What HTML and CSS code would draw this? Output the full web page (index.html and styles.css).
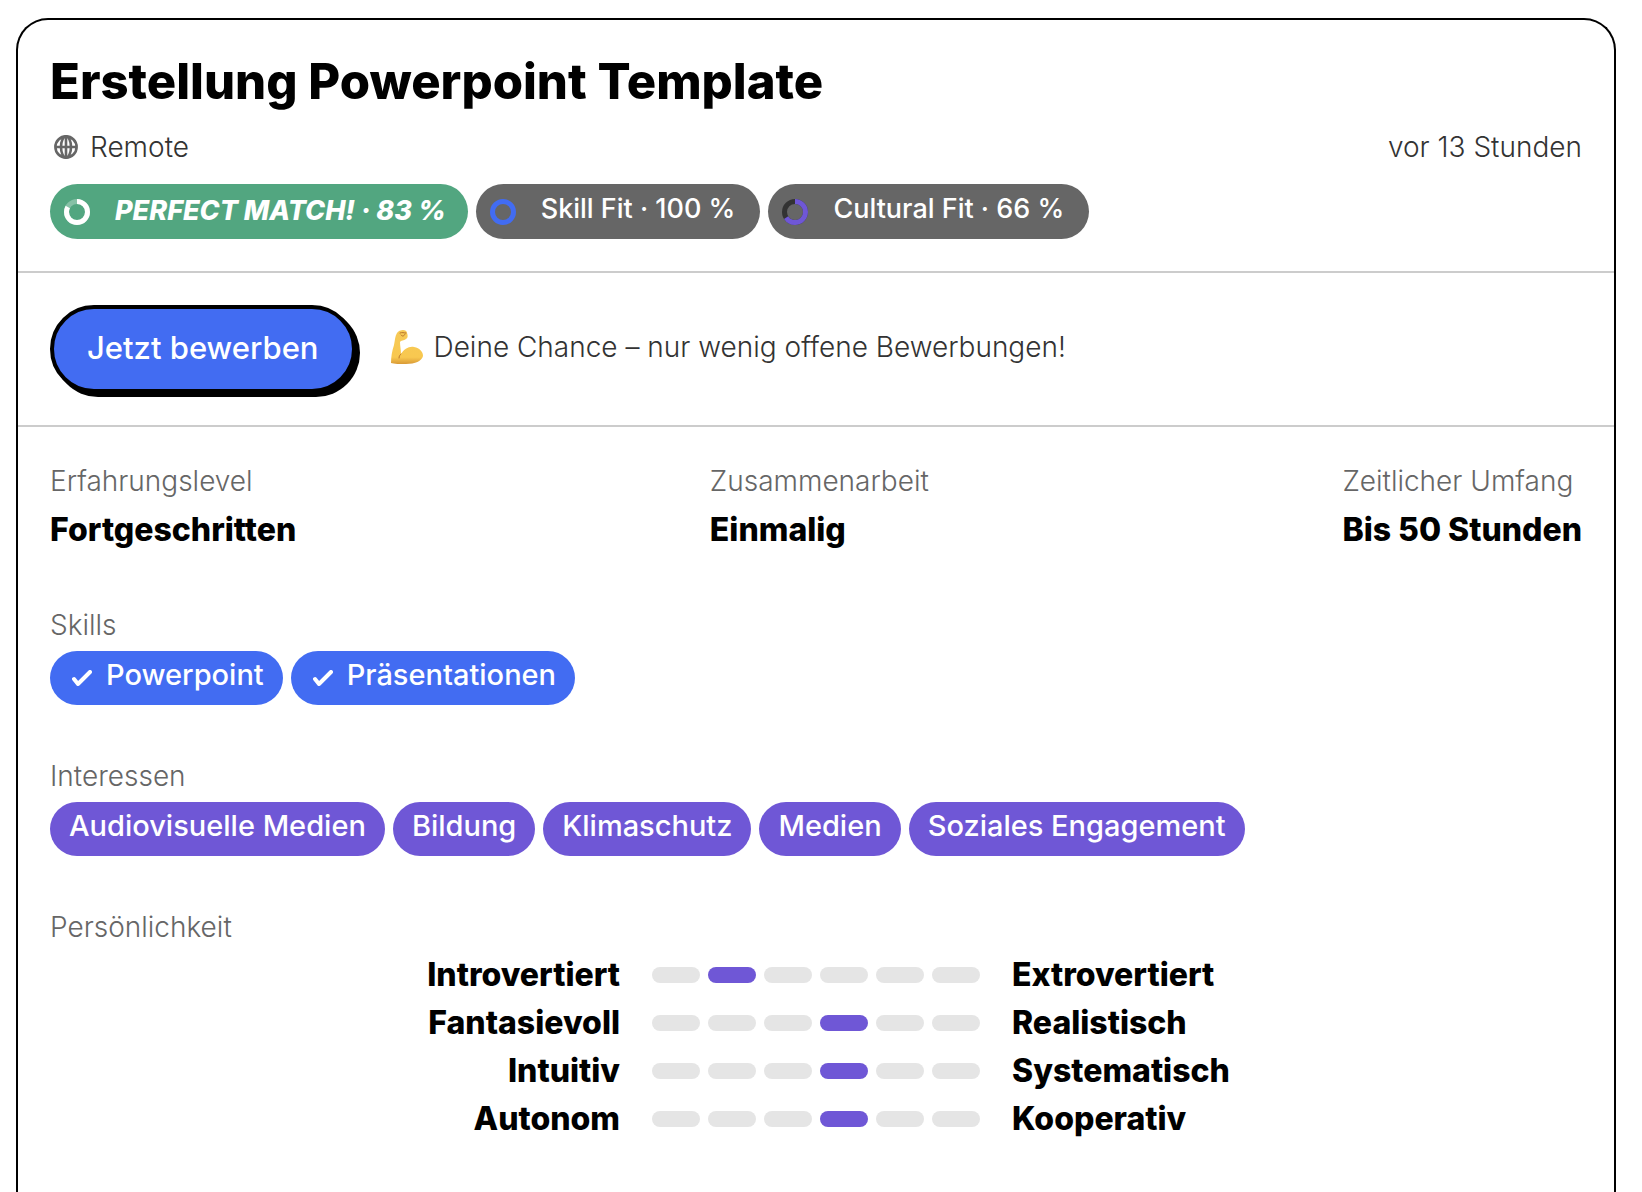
FILE: index.html
```html
<!DOCTYPE html>
<html lang="de">
<head>
    <meta charset="UTF-8">
    <meta name="viewport" content="width=device-width, initial-scale=1.0">
    <title>Erstellung Powerpoint Template</title>
    <link rel="stylesheet" href="styles.css">
</head>
<body>
    <main class="card">
        <header class="section">
            <h1>Erstellung Powerpoint Template</h1>
            <div class="meta">
                <span class="location">
                    <svg class="globe" viewBox="0 0 24 24" fill="none" stroke="#666" stroke-width="2.6">
                        <circle cx="12" cy="12" r="10.6"/>
                        <ellipse cx="12" cy="12" rx="5" ry="10.6"/>
                        <path d="M2 12h20M12 2v20"/>
                    </svg>
                    Remote
                </span>
                <time>vor 13 Stunden</time>
            </div>
            <div class="pills">
                <span class="pill fit perfect">
                    <svg class="ring" viewBox="0 0 26 26" fill="none" stroke-width="5">
                        <circle cx="13" cy="13" r="10.5" stroke="#86c1a6"/>
                        <circle cx="13" cy="13" r="10.5" stroke="#fff" pathLength="100" stroke-dasharray="83 17" transform="rotate(-90 13 13)"/>
                    </svg>
                    <span class="label">PERFECT MATCH! · 83 %</span>
                </span>
                <span class="pill fit">
                    <svg class="ring" viewBox="0 0 26 26" fill="none" stroke-width="5">
                        <circle cx="13" cy="13" r="10.5" stroke="#426cf2"/>
                    </svg>
                    <span class="label">Skill Fit · 100 %</span>
                </span>
                <span class="pill fit">
                    <svg class="ring" viewBox="0 0 26 26" fill="none" stroke-width="5">
                        <circle cx="13" cy="13" r="10.5" stroke="#333"/>
                        <circle cx="13" cy="13" r="10.5" stroke="#6f57d6" pathLength="100" stroke-dasharray="66 34" transform="rotate(-90 13 13)"/>
                    </svg>
                    <span class="label">Cultural Fit · 66 %</span>
                </span>
            </div>
        </header>

        <section class="section apply">
            <button type="button" class="apply-button">Jetzt bewerben</button>
            <p class="chance">
                <svg class="muscle" viewBox="0 0 34 36">
                    <defs>
                        <linearGradient id="skin" x1="0" y1="0" x2="0" y2="1">
                            <stop offset="0" stop-color="#f6c956"/>
                            <stop offset="0.8" stop-color="#f8c850"/>
                            <stop offset="1" stop-color="#d99a36"/>
                        </linearGradient>
                    </defs>
                    <path fill="url(#skin)" d="M7 4C8 2 11 1 13 1C15 1 17 2 17 4C18 6 18 9 16 10C14 12 11 11 10 13C10 17 11 21 11 25C14 20 19 17 24 18C30 19 33 23 33 27C32 32 25 35 16 35C10 35 4 35 1 34C1 28 2 22 4 16C5 11 5 7 7 4Z"/>
                    <path fill="none" stroke="#b9742a" stroke-linecap="round" d="M10 4c2-1 4 0 6 0M11 6c2 2 3 1 4-1M11 25c-1 1-2 2-2 4"/>
                </svg>
                Deine Chance – nur wenig offene Bewerbungen!
            </p>
        </section>

        <section class="section details">
            <dl class="facts">
                <div>
                    <dt>Erfahrungslevel</dt>
                    <dd>Fortgeschritten</dd>
                </div>
                <div>
                    <dt>Zusammenarbeit</dt>
                    <dd>Einmalig</dd>
                </div>
                <div>
                    <dt>Zeitlicher Umfang</dt>
                    <dd>Bis 50 Stunden</dd>
                </div>
            </dl>

            <div class="group">
                <h2>Skills</h2>
                <div class="pills">
                    <span class="pill skill">
                        <svg class="check" viewBox="0 0 20 16"><path d="M2 9l4 5L18 2"/></svg>
                        <span class="label">Powerpoint</span>
                    </span>
                    <span class="pill skill">
                        <svg class="check" viewBox="0 0 20 16"><path d="M2 9l4 5L18 2"/></svg>
                        <span class="label">Präsentationen</span>
                    </span>
                </div>
            </div>

            <div class="group">
                <h2>Interessen</h2>
                <div class="pills">
                    <span class="pill interest"><span class="label">Audiovisuelle Medien</span></span>
                    <span class="pill interest"><span class="label">Bildung</span></span>
                    <span class="pill interest"><span class="label">Klimaschutz</span></span>
                    <span class="pill interest"><span class="label">Medien</span></span>
                    <span class="pill interest"><span class="label">Soziales Engagement</span></span>
                </div>
            </div>

            <div class="group">
                <h2>Persönlichkeit</h2>
                <div class="traits">
                    <span class="left">Introvertiert</span>
                    <div class="scale"><i></i><i class="active"></i><i></i><i></i><i></i><i></i></div>
                    <span>Extrovertiert</span>

                    <span class="left">Fantasievoll</span>
                    <div class="scale"><i></i><i></i><i></i><i class="active"></i><i></i><i></i></div>
                    <span>Realistisch</span>

                    <span class="left">Intuitiv</span>
                    <div class="scale"><i></i><i></i><i></i><i class="active"></i><i></i><i></i></div>
                    <span>Systematisch</span>

                    <span class="left">Autonom</span>
                    <div class="scale"><i></i><i></i><i></i><i class="active"></i><i></i><i></i></div>
                    <span>Kooperativ</span>
                </div>
            </div>
        </section>
    </main>
</body>
</html>
```
FILE: styles.css
```css
* {
    margin: 0;
    padding: 0;
    box-sizing: border-box;
}
body {
    padding: 18px 26px 0 16px;
    background-color: #fff;
    color: #333;
    font-family: Inter, "Liberation Sans", sans-serif;
    font-size: 28px;
    font-weight: 300;
    line-height: 40px;
}
.card {
    border: 2px solid #000;
    border-bottom: none;
    border-radius: 32px 32px 0 0;
}
.section {
    padding: 32px;
}
.section + .section {
    border-top: 2px solid #ccc;
}
h1 {
    color: #000;
    font-size: 49px;
    line-height: 60px;
    font-weight: 800;
}
.meta {
    display: flex;
    justify-content: space-between;
    align-items: center;
    margin: 15px 0 17px;
}
.location {
    display: flex;
    align-items: center;
    gap: 12px;
    padding-left: 4px;
}
.globe {
    width: 24px;
    height: 24px;
}
.pills {
    display: flex;
    flex-wrap: wrap;
    gap: 8px;
}
.pill {
    display: flex;
    align-items: center;
    height: 54px;
    padding: 0 19px;
    border-radius: 28px;
    color: #fff;
    font-size: 29px;
    font-weight: 500;
    white-space: nowrap;
}
.label {
    padding-bottom: 6px;
}
.fit {
    gap: 25px;
    height: 55px;
    padding: 0 25px 0 14px;
    background-color: #666;
    font-size: 27px;
}
.perfect {
    padding-right: 22px;
    background-color: #52a680;
    font-weight: 800;
    font-style: italic;
}
.perfect .label {
    padding-bottom: 2px;
}
.ring {
    width: 26px;
    height: 26px;
}
.skill {
    gap: 14px;
    padding-left: 22px;
    background-color: #426cf2;
}
.check {
    width: 20px;
    height: 16px;
    fill: none;
    stroke: #fff;
    stroke-width: 4;
    stroke-linecap: round;
    stroke-linejoin: round;
}
.interest {
    background-color: #6f57d6;
}
.apply {
    display: flex;
    align-items: center;
    gap: 34px;
}
.apply-button {
    height: 88px;
    padding: 0 33px 4px;
    border: 4px solid #000;
    border-radius: 44px;
    background-color: #426cf2;
    box-shadow: 4px 4px 0 #000;
    color: #fff;
    font-family: inherit;
    font-size: 31px;
    font-weight: 500;
    cursor: pointer;
}
.chance {
    display: flex;
    align-items: center;
    gap: 10px;
    padding-bottom: 5px;
}
.muscle {
    width: 34px;
    height: 36px;
}
.facts {
    display: flex;
    justify-content: space-between;
}
dt,
h2 {
    color: #666;
    font-size: 28px;
    line-height: 40px;
    font-weight: 300;
}
dt {
    margin-bottom: 5px;
}
dd,
.traits {
    color: #000;
    font-size: 32px;
    line-height: 48px;
    font-weight: 800;
}
.details {
    padding: 34px 32px 64px;
}
.group {
    margin-top: 51px;
}
.group .pills {
    margin-top: 6px;
}
.traits {
    display: grid;
    grid-template-columns: 1fr auto 1fr;
    column-gap: 32px;
    align-items: center;
    margin-top: 4px;
}
.left {
    text-align: right;
}
.scale {
    display: flex;
    gap: 8px;
}
.scale i {
    width: 48px;
    height: 16px;
    border-radius: 8px;
    background-color: #e5e5e5;
}
.scale .active {
    background-color: #6f57d6;
}
```
